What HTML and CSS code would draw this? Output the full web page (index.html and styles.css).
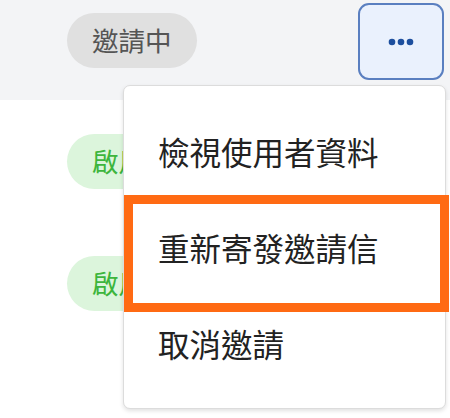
FILE: index.html
```html
<!DOCTYPE html>
<html lang="zh-TW">
<head>
    <meta charset="UTF-8">
    <meta name="viewport" content="width=device-width, initial-scale=1.0">
    <title>成員列表</title>
    <link rel="stylesheet" href="styles.css">
</head>
<body>
    <div class="list">
        <div class="row row-top">
            <span class="pill pill-gray">邀請中</span>
            <button class="more-btn" aria-label="更多">
                <svg width="26" height="8" viewBox="0 0 26 8">
                    <circle cx="4" cy="4" r="3.3" fill="#1d4f9e"/>
                    <circle cx="13" cy="4" r="3.3" fill="#1d4f9e"/>
                    <circle cx="22" cy="4" r="3.3" fill="#1d4f9e"/>
                </svg>
            </button>
        </div>
        <div class="row">
            <span class="pill pill-green">啟用中</span>
        </div>
        <div class="row">
            <span class="pill pill-green">啟用中</span>
        </div>
    </div>

    <div class="menu">
        <div class="menu-item">檢視使用者資料</div>
        <div class="menu-item">重新寄發邀請信</div>
        <div class="menu-item">取消邀請</div>
    </div>

    <div class="highlight"></div>
</body>
</html>
```

FILE: styles.css
```css
body {
    margin: 0;
    width: 450px;
    height: 418px;
    overflow: hidden;
    position: relative;
    font-family: "Noto Sans CJK TC", "Noto Sans", sans-serif;
    background: #fff;
}
.list {
    display: flex;
    flex-direction: column;
}
.row {
    height: 122px;
    display: flex;
    align-items: center;
    padding-left: 67px;
    box-sizing: border-box;
}
.row-top {
    height: 100px;
    align-items: flex-start;
    padding-top: 13px;
    padding-right: 6px;
    justify-content: space-between;
    background: #f3f4f6;
}
.pill {
    display: inline-flex;
    align-items: center;
    height: 55px;
    padding: 0 25px;
    border-radius: 28px;
    font-size: 26.5px;
    line-height: 1;
}
.pill-gray {
    background: #e0e0e0;
    color: #555;
}
.pill-green {
    background: #dcf5dc;
    color: #3db53d;
}
.more-btn {
    width: 86px;
    height: 77px;
    margin-top: -10px;
    border: 2px solid #5a7fc0;
    border-radius: 11px;
    background: #eaf1fd;
    display: flex;
    align-items: center;
    justify-content: center;
    padding: 0;
    cursor: pointer;
}
.menu {
    position: absolute;
    left: 123px;
    top: 85px;
    width: 321px;
    padding: 17px 0;
    background: #fff;
    border: 1px solid #dcdcdc;
    border-radius: 7px;
    box-shadow: 0 2px 4px rgba(0, 0, 0, 0.12);
}
.menu-item {
    height: 96px;
    display: flex;
    align-items: center;
    padding-left: 34px;
    font-size: 31.5px;
    color: #222;
}
.highlight {
    position: absolute;
    left: 124px;
    top: 195px;
    width: 325px;
    height: 117px;
    box-sizing: border-box;
    border: 9px solid #ff6a13;
}
```
